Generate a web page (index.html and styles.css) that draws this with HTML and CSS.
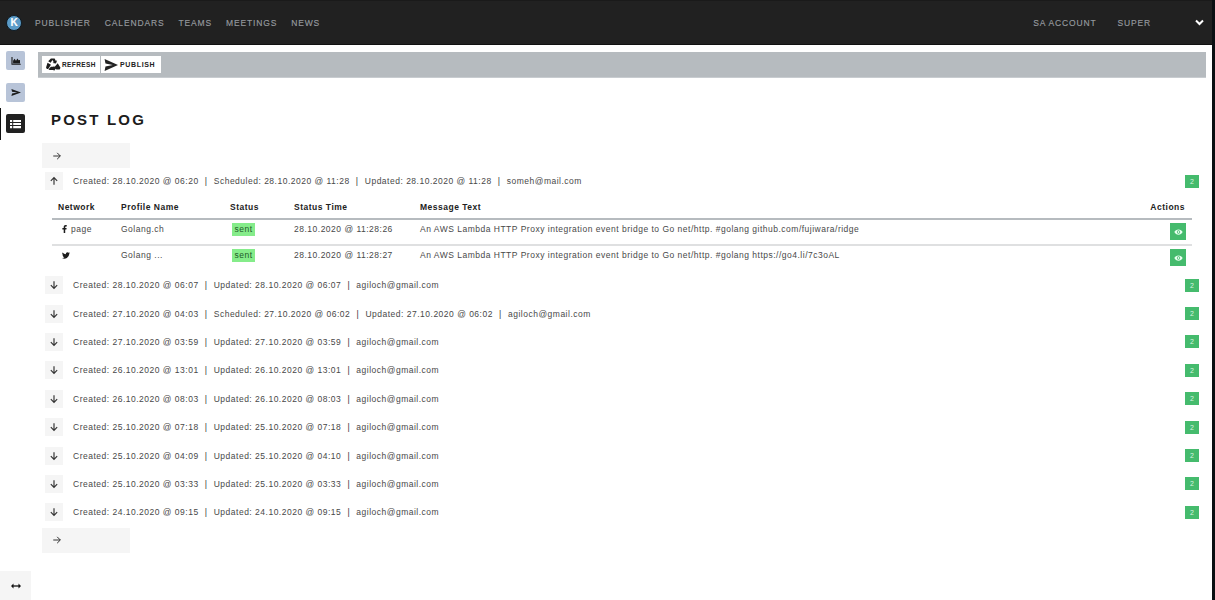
FILE: index.html
```html
<!DOCTYPE html>
<html lang="en">
<head>
<meta charset="utf-8">
<title>Post Log</title>
<link rel="stylesheet" href="styles.css">
</head>
<body>
<svg class="defs" width="0" height="0" aria-hidden="true">
  <symbol id="arrow-up" viewBox="0 0 12 12"><path d="M6 10.500V2M2.200 5.800 6 2l3.800 3.800" fill="none" stroke="currentColor" stroke-width="1.400"/></symbol>
  <symbol id="arrow-down" viewBox="0 0 12 12"><path d="M6 1.500V10M2.200 6.200 6 10l3.800-3.800" fill="none" stroke="currentColor" stroke-width="1.400"/></symbol>
  <symbol id="arrow-right" viewBox="0 0 12 12"><path d="M1.500 6H10M6.200 2.200 10 6l-3.800 3.800" fill="none" stroke="currentColor" stroke-width="1.200"/></symbol>
  <symbol id="send" viewBox="0 0 24 16" preserveAspectRatio="none"><path d="M1 0 24 8 1 16l1.500-6L15 8 2.500 6z" fill="currentColor"/></symbol>
  <symbol id="eye" viewBox="0 0 12 8"><path d="M6 .5C3.500.5 1.500 2 .4 4c1.100 2 3.100 3.500 5.600 3.500S10.500 6 11.600 4C10.500 2 8.500.5 6 .5zm0 5.700A2.200 2.200 0 1 1 6 1.800a2.200 2.200 0 0 1 0 4.400z" fill="currentColor"/><circle cx="6" cy="4" r="1.200" fill="currentColor"/></symbol>
</svg>
<header class="topbar">
  <div class="logo">K</div>
  <nav class="nav">
    <a>Publisher</a><a>Calendars</a><a>Teams</a><a>Meetings</a><a>News</a>
  </nav>
  <div class="account">
    <a>SA Account</a><a>Super</a>
    <svg class="chevron" width="9" height="7" viewBox="0 0 9 7"><path d="M1 1.500 4.500 5 8 1.500" fill="none" stroke="#fff" stroke-width="2"/></svg>
  </div>
</header>
<div class="shell">
  <aside class="side">
    <div class="side-items">
      <div class="side-item">
        <span class="side-btn"><svg width="10" height="8" viewBox="0 0 13 11"><path d="M1 0v10h12" fill="none" stroke="#1c1c1c" stroke-width="1.500"/><path d="M2.500 9V5l2-2.500L6.500 5 8.500 2l1.500 2.500L12 4v5z" fill="#1c1c1c"/></svg></span>
      </div>
      <div class="side-item">
        <span class="side-btn"><svg width="10" height="7"><use href="#send"/></svg></span>
      </div>
      <div class="side-item active">
        <span class="side-btn dark"><svg width="11" height="10" viewBox="0 0 12 10"><path d="M0 .5h2.400v2.200H0zM3.500.5H12v2.200H3.500zM0 3.900h2.400v2.200H0zM3.500 3.900H12v2.200H3.500zM0 7.300h2.400v2.200H0zM3.500 7.300H12v2.200H3.500z" fill="#fff"/></svg></span>
      </div>
    </div>
    <button class="expand"><svg width="10" height="6" viewBox="0 0 10 6"><path d="M1.500 3h7" stroke="#111" stroke-width="1.300"/><path d="M0 3l2.500-2.500v5zM10 3 7.500.5v5z" fill="#111"/></svg></button>
  </aside>
  <main class="main">
    <div class="toolbar">
      <button class="tool tool-refresh"><svg width="15" height="14" viewBox="0 0 16 15"><path d="M5.200.6h4l1.400 2.500 1.300-.8-1.200 3.600-3.700-.6 1.300-.8L6.800 2.200 5 5.200 2.300 3.600zM1.600 5.100l2.800 1.600.9.500-3 4.700H.9L0 10.200zM12.500 5.500l3 5-.9 1.700H11l-1.600-2.800zM5.300 9.300h3v-1l2.300 2.900-2.300 3v-1.400H4.500l-1.800-.1.900-1.600z" fill="#1c1c1c"/></svg>Refresh</button>
      <button class="tool tool-publish"><svg width="14" height="12"><use href="#send"/></svg>Publish</button>
    </div>
    <h1 class="title">Post Log</h1>
    <button class="pager"><svg width="10" height="10"><use href="#arrow-right"/></svg></button>
    <div class="post post-open">
      <button class="toggle"><svg width="10" height="10"><use href="#arrow-up"/></svg></button>
      <p class="meta">Created: 28.10.2020 @ 06:20<i>|</i>Scheduled: 28.10.2020 @ 11:28<i>|</i>Updated: 28.10.2020 @ 11:28<i>|</i>someh@mail.com</p>
      <span class="count">2</span>
    </div>
    <table class="log">
      <thead>
        <tr><th class="c-net">Network</th><th class="c-prof">Profile Name</th><th class="c-stat">Status</th><th class="c-time">Status Time</th><th>Message Text</th><th class="c-act">Actions</th></tr>
      </thead>
      <tbody>
        <tr>
          <td class="net"><svg width="5" height="8" viewBox="0 0 5 9"><path d="M3.300 9V5h1.300l.3-1.600H3.300v-1c0-.5.200-.8.800-.8H5V.1C4.800.100 4.300 0 3.800 0 2.500 0 1.600.8 1.600 2.200v1.200H.1V5h1.500v4z" fill="#1c1c1c"/></svg><span>page</span></td>
          <td>Golang.ch</td>
          <td class="c-stat"><span class="sent">sent</span></td>
          <td>28.10.2020 @ 11:28:26</td>
          <td>An AWS Lambda HTTP Proxy integration event bridge to Go net/http. #golang github.com/fujiwara/ridge</td>
          <td class="c-act"><span class="view"><svg width="9" height="6"><use href="#eye"/></svg></span></td>
        </tr>
        <tr>
          <td class="net"><svg width="8" height="7" viewBox="0 0 24 20"><path d="M24 2.400a9.800 9.800 0 0 1-2.800.8A5 5 0 0 0 23.300.5a9.900 9.900 0 0 1-3.100 1.200 4.900 4.900 0 0 0-8.400 4.500A14 14 0 0 1 1.700.9a4.900 4.900 0 0 0 1.500 6.600 4.900 4.900 0 0 1-2.200-.6c0 2.400 1.700 4.400 3.900 4.900a4.900 4.900 0 0 1-2.200.1 4.900 4.900 0 0 0 4.600 3.400A9.900 9.900 0 0 1 0 17.300 14 14 0 0 0 21.500 4.900 10 10 0 0 0 24 2.400z" fill="#1c1c1c"/></svg></td>
          <td>Golang ...</td>
          <td class="c-stat"><span class="sent">sent</span></td>
          <td>28.10.2020 @ 11:28:27</td>
          <td>An AWS Lambda HTTP Proxy integration event bridge to Go net/http. #golang https://go4.li/7c3oAL</td>
          <td class="c-act"><span class="view"><svg width="9" height="6"><use href="#eye"/></svg></span></td>
        </tr>
      </tbody>
    </table>
    <div class="post">
      <button class="toggle"><svg width="10" height="10"><use href="#arrow-down"/></svg></button>
      <p class="meta">Created: 28.10.2020 @ 06:07<i>|</i>Updated: 28.10.2020 @ 06:07<i>|</i>agiloch@gmail.com</p>
      <span class="count">2</span>
    </div>
    <div class="post">
      <button class="toggle"><svg width="10" height="10"><use href="#arrow-down"/></svg></button>
      <p class="meta">Created: 27.10.2020 @ 04:03<i>|</i>Scheduled: 27.10.2020 @ 06:02<i>|</i>Updated: 27.10.2020 @ 06:02<i>|</i>agiloch@gmail.com</p>
      <span class="count">2</span>
    </div>
    <div class="post">
      <button class="toggle"><svg width="10" height="10"><use href="#arrow-down"/></svg></button>
      <p class="meta">Created: 27.10.2020 @ 03:59<i>|</i>Updated: 27.10.2020 @ 03:59<i>|</i>agiloch@gmail.com</p>
      <span class="count">2</span>
    </div>
    <div class="post">
      <button class="toggle"><svg width="10" height="10"><use href="#arrow-down"/></svg></button>
      <p class="meta">Created: 26.10.2020 @ 13:01<i>|</i>Updated: 26.10.2020 @ 13:01<i>|</i>agiloch@gmail.com</p>
      <span class="count">2</span>
    </div>
    <div class="post">
      <button class="toggle"><svg width="10" height="10"><use href="#arrow-down"/></svg></button>
      <p class="meta">Created: 26.10.2020 @ 08:03<i>|</i>Updated: 26.10.2020 @ 08:03<i>|</i>agiloch@gmail.com</p>
      <span class="count">2</span>
    </div>
    <div class="post">
      <button class="toggle"><svg width="10" height="10"><use href="#arrow-down"/></svg></button>
      <p class="meta">Created: 25.10.2020 @ 07:18<i>|</i>Updated: 25.10.2020 @ 07:18<i>|</i>agiloch@gmail.com</p>
      <span class="count">2</span>
    </div>
    <div class="post">
      <button class="toggle"><svg width="10" height="10"><use href="#arrow-down"/></svg></button>
      <p class="meta">Created: 25.10.2020 @ 04:09<i>|</i>Updated: 25.10.2020 @ 04:10<i>|</i>agiloch@gmail.com</p>
      <span class="count">2</span>
    </div>
    <div class="post">
      <button class="toggle"><svg width="10" height="10"><use href="#arrow-down"/></svg></button>
      <p class="meta">Created: 25.10.2020 @ 03:33<i>|</i>Updated: 25.10.2020 @ 03:33<i>|</i>agiloch@gmail.com</p>
      <span class="count">2</span>
    </div>
    <div class="post">
      <button class="toggle"><svg width="10" height="10"><use href="#arrow-down"/></svg></button>
      <p class="meta">Created: 24.10.2020 @ 09:15<i>|</i>Updated: 24.10.2020 @ 09:15<i>|</i>agiloch@gmail.com</p>
      <span class="count">2</span>
    </div>
    <button class="pager pager-end"><svg width="10" height="10"><use href="#arrow-right"/></svg></button>
  </main>
</div>
</body>
</html>
```
FILE: styles.css
```css
* { box-sizing: border-box; }
html, body { margin: 0; height: 100%; }
body { background: #fff; border-right: 3px solid #0b1013; color: #333; font-family: "Liberation Sans", Arial, sans-serif; font-size: 8.5px; letter-spacing: .5px; overflow: hidden; }
.defs { position: absolute; }
button { font: inherit; letter-spacing: inherit; border: 0; padding: 0; color: #222; }

.topbar { height: 45px; background: #212121; border-bottom: 1px solid #111; border-top: 1px solid #1a1a1a; display: flex; align-items: center; padding: 0 8px 0 6px; color: #969a9f; letter-spacing: .85px; text-transform: uppercase; -webkit-text-stroke: .15px; }
.logo { width: 16px; height: 16px; border: 1px solid #0e1a22; border-radius: 50%; background: #5b9bc8; color: #fff; font-size: 10px; font-weight: 700; letter-spacing: 0; display: flex; align-items: center; justify-content: center; }
.nav { display: flex; gap: 14px; margin-left: 13px; }
.account { margin-left: auto; display: flex; align-items: center; }
.account a:nth-child(2) { margin-left: 21px; }
.chevron { margin-left: 44px; }

.shell { display: flex; height: 555px; }
.side { width: 38px; display: flex; flex-direction: column; justify-content: space-between; }
.side-items { display: flex; flex-direction: column; }
.side-item { padding-left: 6px; height: 31.500px; display: flex; align-items: center; }
.side-item.active { border-left: 1px solid #111; padding-left: 5px; }
.side-btn { width: 19px; height: 19px; background: #b8c4d8; border-radius: 2px; display: flex; align-items: center; justify-content: center; color: #1c1c1c; }
.side-btn.dark { background: #212121; }
.expand { width: 31px; height: 29px; background: #f5f5f5; display: flex; align-items: center; justify-content: center; }

.main { flex: 1; padding: 7px 6px 0 0; min-width: 0; }
.toolbar { height: 26px; background: #b6bbbf; border-bottom: 1px solid #c8ccd0; display: flex; align-items: center; padding-left: 4px; gap: 1px; }
.tool { height: 17px; background: #fff; display: flex; align-items: center; padding-left: 4px; font-size: 7px; font-weight: 700; letter-spacing: .45px; text-transform: uppercase; color: #222; }
.tool-refresh { width: 58px; gap: 1px; font-size: 6.500px; letter-spacing: .4px; }
.tool-publish { width: 60px; padding-left: 3px; gap: 2px; letter-spacing: .65px; }
.title { margin: 0; padding: 33px 0 15px 13px; font-size: 15px; line-height: 17px; font-weight: 700; letter-spacing: 2.200px; text-transform: uppercase; color: #1c1c1c; }
.pager { display: flex; align-items: center; padding-left: 10px; margin-left: 4px; width: 88px; height: 25px; background: #f5f5f5; color: #333; }
.post { display: flex; align-items: center; height: 28.400px; padding: 0 7px; }
.post-open { height: 26px; }
.toggle { width: 18px; height: 18px; background: #f5f5f5; display: flex; align-items: center; justify-content: center; color: #333; }
.meta { margin: 0 0 0 10px; flex: 1; color: #484848; }
.meta i { font-style: normal; margin: 0 6.200px; color: #333; }
.count { width: 14px; height: 13px; background: #45bb6d; color: #d7f3e0; font-size: 7px; letter-spacing: 0; display: flex; align-items: center; justify-content: center; }

.log { width: calc(100% - 28px); margin: 0 0 0 14px; border-collapse: collapse; table-layout: fixed; color: #484848; line-height: 13px; }
.log th { height: 25px; text-align: left; font-weight: 700; color: #222; border-bottom: 2px solid #b6bbbf; padding: 3px 0 0 6px; }
.log td { height: 26px; padding: 3px 0 0 6px; vertical-align: top; border-bottom: 2px solid #dfe0e1; }
.log tbody tr:last-child td { border-bottom: 0; }
.c-net { width: 63px; }
.c-prof { width: 109px; }
.log .c-stat { width: 64px; }
.log td.c-stat { padding-left: 8px; }
.c-time { width: 126px; }
.log .c-act { width: 56px; text-align: right; padding-right: 7px; }
.log td.c-act { padding-right: 6px; padding-top: 3px; }
.log td.net { padding-left: 10px; }
.net svg { vertical-align: -1px; }
.net span { margin-left: 4px; }
.sent { background: #85ec8a; color: #1f5a28; padding: 0 2.500px; display: inline-block; }
.view { display: inline-flex; width: 16px; height: 17px; background: #45bb6d; color: #e8fff0; align-items: center; justify-content: center; vertical-align: top; }
.pager-end { margin-top: 1px; }
```
